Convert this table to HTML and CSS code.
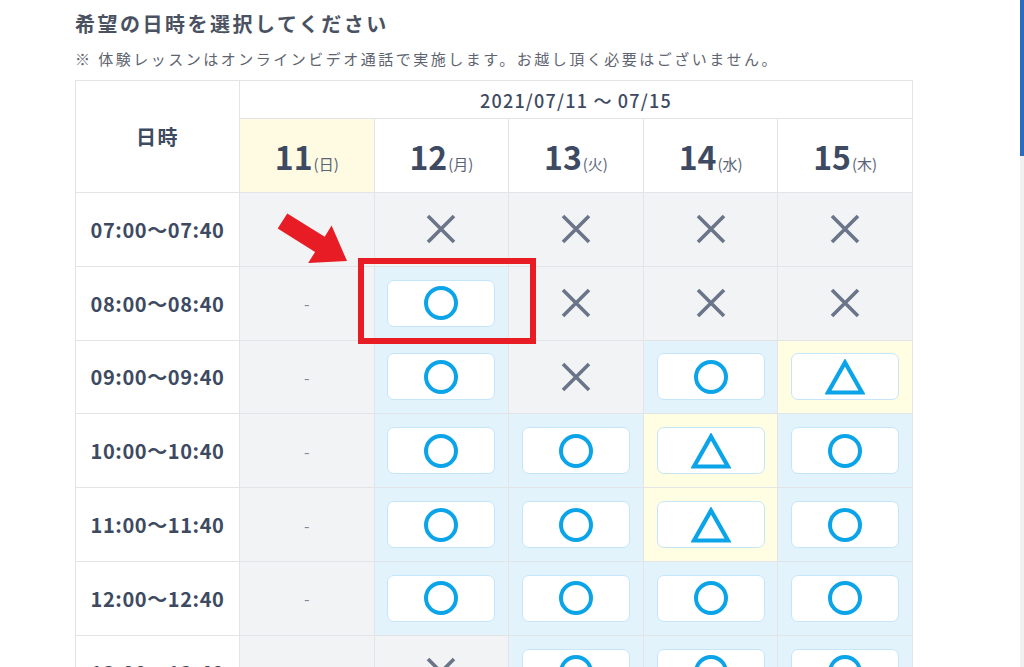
FILE: index.html
```html
<!DOCTYPE html>
<html lang="ja">
<head>
  <meta charset="UTF-8" />
  <title>希望の日時を選択</title>
  <link rel="stylesheet" href="styles.css" />
</head>
<body>

<svg class="defs" width="0" height="0">
  <symbol id="i-ok" viewBox="0 0 34 34">
    <circle cx="17" cy="17" r="15" fill="none" stroke="currentColor" stroke-width="4" />
  </symbol>
  <symbol id="i-no" viewBox="0 0 30 30">
    <path d="M2 2 L28 28 M28 2 L2 28" fill="none" stroke="currentColor" stroke-width="3.6" />
  </symbol>
  <symbol id="i-few" viewBox="0 0 40 36">
    <path d="M20 3.5 L37 33.5 H3 Z" fill="none" stroke="currentColor" stroke-width="4.2" stroke-linejoin="miter" />
  </symbol>
</svg>

<div class="page">
  <h2 class="title">希望の日時を選択してください</h2>
  <p class="note">※ 体験レッスンはオンラインビデオ通話で実施します。お越し頂く必要はございません。</p>

  <table class="schedule">
    <colgroup>
      <col class="col-time" />
      <col class="col-day" /><col class="col-day" /><col class="col-day" /><col class="col-day" /><col class="col-day" />
    </colgroup>
    <thead>
      <tr class="range-row">
        <th rowspan="2" class="head-time">日時</th>
        <th colspan="5" class="range">2021/07/11 〜 07/15</th>
      </tr>
      <tr class="day-row">
        <th class="day sunday">11<small>(日)</small></th>
        <th class="day">12<small>(月)</small></th>
        <th class="day">13<small>(火)</small></th>
        <th class="day">14<small>(水)</small></th>
        <th class="day">15<small>(木)</small></th>
      </tr>
    </thead>
    <tbody>
      <tr>
        <th class="time">07:00〜07:40</th>
        <td class="c-no"><span class="dash">-</span></td>
        <td class="c-no"><svg class="ico-no"><use href="#i-no"/></svg></td>
        <td class="c-no"><svg class="ico-no"><use href="#i-no"/></svg></td>
        <td class="c-no"><svg class="ico-no"><use href="#i-no"/></svg></td>
        <td class="c-no"><svg class="ico-no"><use href="#i-no"/></svg></td>
      </tr>
      <tr>
        <th class="time">08:00〜08:40</th>
        <td class="c-no"><span class="dash">-</span></td>
        <td class="c-ok"><button class="slot"><svg class="ico-ok"><use href="#i-ok"/></svg></button></td>
        <td class="c-no"><svg class="ico-no"><use href="#i-no"/></svg></td>
        <td class="c-no"><svg class="ico-no"><use href="#i-no"/></svg></td>
        <td class="c-no"><svg class="ico-no"><use href="#i-no"/></svg></td>
      </tr>
      <tr>
        <th class="time">09:00〜09:40</th>
        <td class="c-no"><span class="dash">-</span></td>
        <td class="c-ok"><button class="slot"><svg class="ico-ok"><use href="#i-ok"/></svg></button></td>
        <td class="c-no"><svg class="ico-no"><use href="#i-no"/></svg></td>
        <td class="c-ok"><button class="slot"><svg class="ico-ok"><use href="#i-ok"/></svg></button></td>
        <td class="c-few"><button class="slot"><svg class="ico-few"><use href="#i-few"/></svg></button></td>
      </tr>
      <tr>
        <th class="time">10:00〜10:40</th>
        <td class="c-no"><span class="dash">-</span></td>
        <td class="c-ok"><button class="slot"><svg class="ico-ok"><use href="#i-ok"/></svg></button></td>
        <td class="c-ok"><button class="slot"><svg class="ico-ok"><use href="#i-ok"/></svg></button></td>
        <td class="c-few"><button class="slot"><svg class="ico-few"><use href="#i-few"/></svg></button></td>
        <td class="c-ok"><button class="slot"><svg class="ico-ok"><use href="#i-ok"/></svg></button></td>
      </tr>
      <tr>
        <th class="time">11:00〜11:40</th>
        <td class="c-no"><span class="dash">-</span></td>
        <td class="c-ok"><button class="slot"><svg class="ico-ok"><use href="#i-ok"/></svg></button></td>
        <td class="c-ok"><button class="slot"><svg class="ico-ok"><use href="#i-ok"/></svg></button></td>
        <td class="c-few"><button class="slot"><svg class="ico-few"><use href="#i-few"/></svg></button></td>
        <td class="c-ok"><button class="slot"><svg class="ico-ok"><use href="#i-ok"/></svg></button></td>
      </tr>
      <tr>
        <th class="time">12:00〜12:40</th>
        <td class="c-no"><span class="dash">-</span></td>
        <td class="c-ok"><button class="slot"><svg class="ico-ok"><use href="#i-ok"/></svg></button></td>
        <td class="c-ok"><button class="slot"><svg class="ico-ok"><use href="#i-ok"/></svg></button></td>
        <td class="c-ok"><button class="slot"><svg class="ico-ok"><use href="#i-ok"/></svg></button></td>
        <td class="c-ok"><button class="slot"><svg class="ico-ok"><use href="#i-ok"/></svg></button></td>
      </tr>
      <tr>
        <th class="time">13:00〜13:40</th>
        <td class="c-no"><span class="dash">-</span></td>
        <td class="c-no"><svg class="ico-no"><use href="#i-no"/></svg></td>
        <td class="c-ok"><button class="slot"><svg class="ico-ok"><use href="#i-ok"/></svg></button></td>
        <td class="c-ok"><button class="slot"><svg class="ico-ok"><use href="#i-ok"/></svg></button></td>
        <td class="c-ok"><button class="slot"><svg class="ico-ok"><use href="#i-ok"/></svg></button></td>
      </tr>
    </tbody>
  </table>

  <!-- annotation drawn over the table -->
  <svg class="arrow" viewBox="0 0 85 65">
    <polygon points="17.3,8.4 54.7,31.7 61.6,20.6 77,56 38.2,58 45.1,46.9 7.7,23.6" />
  </svg>
  <div class="highlight"></div>
</div>

<div class="scrollbar"><div class="thumb"></div></div>

</body>
</html>
```

FILE: styles.css
```css
:root {
  --text: #3d4a62;
  --line: #e3e4e7;
  --gray-cell: #f2f3f5;
  --blue-cell: #e3f3fc;
  --yellow-cell: #fffde2;
  --accent: #0ca4e8;
  --cross: #6b7589;
  --red: #e81c25;
}

html,
body {
  margin: 0;
  height: 100%;
  overflow: hidden;
  background: #fff;
}

body {
  font-family: "Noto Sans CJK JP", "Noto Sans", sans-serif;
  color: var(--text);
}

.defs {
  position: absolute;
}

.page {
  position: relative;
  padding: 10px 0 0 75px;
}

.title {
  margin: 0;
  font-size: 20px;
  line-height: 28px;
  font-weight: 700;
  letter-spacing: 2.5px;
  color: #4a5262;
}

.note {
  margin: 10px 0 0;
  font-size: 15px;
  line-height: 22px;
  letter-spacing: 2.5px;
  color: #5e6470;
}

/* Schedule table */
.schedule {
  margin-top: 10px;
  border-collapse: collapse;
  table-layout: fixed;
  width: 837px;
}

.col-time {
  width: 164px;
}

.col-day {
  width: 134.6px;
}

.schedule th,
.schedule td {
  border: 1px solid var(--line);
  padding: 0;
  text-align: center;
  vertical-align: middle;
}

.head-time {
  font-size: 20px;
  font-weight: 700;
  letter-spacing: 1.5px;
}

.range-row th {
  height: 37px;
}

.range {
  font-size: 18px;
  font-weight: 500;
  letter-spacing: 1.2px;
}

.day-row th {
  height: 73px;
}

.day {
  font-size: 32px;
  font-weight: 700;
  line-height: 1;
}

.day small {
  font-size: 15px;
  font-weight: 400;
  color: #5a6478;
  margin-left: 1px;
}

.sunday {
  background: #fffbe3;
}

.schedule tbody th,
.schedule tbody td {
  height: 72.8px;
}

.time {
  font-size: 20px;
  font-weight: 600;
  letter-spacing: 0.6px;
}

.c-no {
  background: var(--gray-cell);
}

.c-ok {
  background: var(--blue-cell);
}

.c-few {
  background: var(--yellow-cell);
}

.dash {
  font-size: 16px;
  color: #7f889a;
}

.slot {
  display: flex;
  align-items: center;
  justify-content: center;
  width: 108px;
  height: 47px;
  margin: 0 auto;
  padding: 0;
  background: #fff;
  border: 1px solid #c5e6f8;
  border-radius: 7px;
  color: var(--accent);
  cursor: pointer;
}

.ico-ok {
  width: 34px;
  height: 34px;
}

.ico-few {
  width: 40px;
  height: 36px;
}

.ico-no {
  display: block;
  margin: 0 auto;
  width: 30px;
  height: 30px;
  color: var(--cross);
}

/* Red annotation */
.arrow {
  position: absolute;
  left: 270px;
  top: 205px;
  width: 85px;
  height: 65px;
  fill: var(--red);
}

.highlight {
  position: absolute;
  left: 358px;
  top: 258px;
  width: 178px;
  height: 86px;
  box-sizing: border-box;
  border: 6px solid var(--red);
}

/* Page scrollbar on the right edge */
.scrollbar {
  position: fixed;
  top: 0;
  right: 0;
  width: 4px;
  height: 100%;
  background: #f1f1f1;
}

.thumb {
  height: 156px;
  background: #2a6dc0;
}
```
